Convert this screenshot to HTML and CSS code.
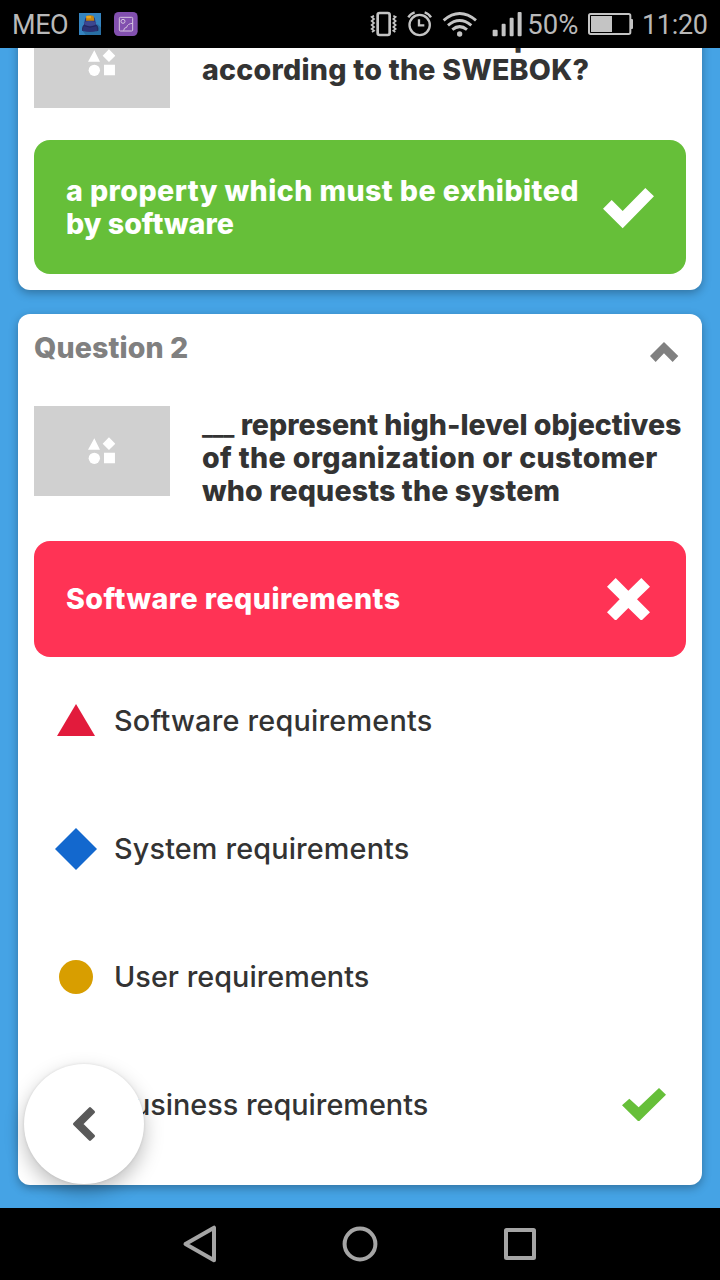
FILE: index.html
```
<!DOCTYPE html>
<html lang="en">
<head>
<meta charset="utf-8">
<title>Quiz results</title>
<link rel="stylesheet" href="styles.css">
</head>
<body>
<svg class="defs" aria-hidden="true">
  <symbol id="shapes" viewBox="264 502 82 82">
    <path d="M264 540L283 506L300 540ZM308 522L327 503L346 522L327 541ZM312 549H345V581H312Z"/>
    <circle cx="283" cy="566" r="17"/>
  </symbol>
</svg>
<div class="screen">
  <header class="status">
    <span class="carrier">MEO</span>
    <svg class="app-icon" viewBox="0 0 66 66">
      <path fill="#3584c0" d="M0 0H66V66H0Z"/>
      <path fill="#286fa3" d="M56 34L66 43V66H20L12 55Z"/>
      <path fill="#252a62" d="M16 34Q8 40 9 53L14 55ZM51 34Q60 40 58 53L52 55Z"/>
      <path fill="#2b3275" d="M17 24Q18 8 33 8Q49 8 49 24L54 54Q34 60 12 54Z"/>
      <path fill="#c8860f" d="M22 9Q33 5 44 9L46 23H21Z"/>
      <path fill="#eba61e" d="M22 9H36V16H22Z"/>
      <path fill="#3d478f" d="M14 28Q33 20 52 28L48 36Q33 42 19 36Z"/>
      <path fill="none" stroke="#191d50" stroke-width="2" d="M15 38Q33 47 52 38"/>
    </svg>
    <svg class="gallery-icon" viewBox="0 0 72 72">
      <rect width="71" height="72" rx="14" fill="#8250af"/>
      <g fill="none" stroke="#d5c5df" stroke-width="3"><rect x="16" y="16" width="40" height="41" rx="3"/><circle cx="27" cy="28" r="6"/><path d="M29 56Q29 47 38 46Q40 35 56 34"/></g>
    </svg>
    <svg class="indicators" viewBox="408 30 460 84">
      <g fill="none" stroke="#c4c4c4">
        <rect x="431" y="39" width="36" height="66" rx="6" stroke-width="8"/>
        <path stroke-width="5" d="M420 47L413 51L420 57L413 63L420 69L413 75L420 81L413 87L420 92L414 96M478 47L485 51L478 57L485 63L478 69L485 75L478 81L485 87L478 92L484 96"/>
        <circle cx="557" cy="75" r="30.500" stroke-width="7"/>
        <path stroke-width="7" d="M555 58V76H571"/><path stroke-width="7" d="M523 52Q529 41 542 37M572 37Q585 41 591 52"/>
        <path stroke-width="9" d="M629 61Q677 20 726 61M642 76Q677 47 712 76M655 89Q677 71 699 89"/>
      </g>
      <g fill="#c4c4c4"><circle cx="677" cy="102" r="8"/><rect x="776" y="89" width="15" height="20" rx="3"/><rect x="803" y="71" width="12" height="38" rx="3"/><rect x="827" y="53" width="12" height="56" rx="3"/><rect x="851" y="36" width="12" height="73" rx="3"/></g>
    </svg>
    <span class="percent">50%</span>
    <svg class="battery" viewBox="0 0 135 66">
      <rect x="3" y="3" width="124" height="60" rx="5" fill="none" stroke="#c4c4c4" stroke-width="6"/><path fill="#c4c4c4" d="M9 9H72V57H9ZM128 18H132Q135 18 135 21V45Q135 48 132 48H128Z"/>
    </svg>
    <span class="time">11:20</span>
  </header>

  <main class="content">
    <section class="card card-first">
      <div class="question">
        <div class="thumb"><svg class="shapes"><use href="#shapes"/></svg></div>
        <p class="prompt"><span class="line line-clipped">p</span><span class="line ls-swebok">according to the SWEBOK?</span></p>
      </div>
      <div class="answer correct">
        <p class="answer-text"><span class="line ls-property">a property which must be exhibited</span><span class="line ls-by">by software</span></p>
        <svg class="check-big" viewBox="68 86 153 121"><path d="M68 148L94 122L127 155L195 86L221 111L127 207Z"/></svg>
      </div>
    </section>

    <section class="card card-second">
      <div class="card-head">
        <h2 class="title">Question 2</h2>
        <svg class="chevron" viewBox="211 546 85 60"><path d="M211 588L253 546L296 588L279 606L253 580L228 606Z"/></svg>
      </div>
      <div class="question">
        <div class="thumb"><svg class="shapes"><use href="#shapes"/></svg></div>
        <p class="prompt"><span class="line ls-represent"><span class="blank">___</span> represent high-level objectives</span><span class="line ls-org">of the organization or customer</span><span class="line ls-who">who requests the system</span></p>
      </div>
      <div class="answer wrong">
        <p class="answer-text"><span class="line ls-wrong">Software requirements</span></p>
        <svg class="cross" viewBox="80 53 129 128"><path d="M80 79L106 53L144 91L183 53L209 79L170 117L209 156L183 181L144 143L106 181L80 156L118 117Z"/></svg>
      </div>
      <ul class="options">
        <li class="option"><svg class="shape" viewBox="0 0 44 44"><path fill="#e21b3c" d="M22 5L41 37H3Z"/></svg><span class="ls-soft">Software requirements</span></li>
        <li class="option"><svg class="shape" viewBox="0 0 44 44"><path fill="#1368ce" d="M22 1L43 22L22 43L1 22Z"/></svg><span class="ls-system">System requirements</span></li>
        <li class="option"><svg class="shape" viewBox="0 0 44 44"><circle cx="22" cy="22" r="17" fill="#d89e00"/></svg><span class="ls-user">User requirements</span></li>
        <li class="option"><svg class="shape" viewBox="0 0 44 44"><path fill="#26890c" d="M6 6H38V38H6Z"/></svg><span class="ls-business">Business requirements</span>
          <svg class="check-small" viewBox="66 53 132 101"><path d="M66 105L88 85L116 111L177 53L198 73L116 154Z"/></svg></li>
      </ul>
    </section>
    <button class="fab" aria-label="Back"><svg class="back" viewBox="216 198 72 108"><path d="M223 252L270 205L281 216L245 252L281 288L270 299Z"/></svg></button>
  </main>

  <nav class="navbar">
    <svg class="nav-icon" viewBox="0 0 40 40"><path d="M5.500 20L34 3.700V36.300Z"/></svg>
    <svg class="nav-icon" viewBox="0 0 40 40"><circle cx="20" cy="20" r="15.400"/></svg>
    <svg class="nav-icon" viewBox="0 0 40 40"><rect x="6" y="6" width="28" height="28" rx=".5"/></svg>
  </nav>
</div>
</body>
</html>
```
FILE: styles.css
```
* { box-sizing: border-box; }
body { margin: 0; }
svg { display: block; flex: none; }
p, h2, ul { margin: 0; padding: 0; }
.defs { position: absolute; width: 0; height: 0; }

.screen {
  display: flex;
  flex-direction: column;
  width: 720px;
  height: 1280px;
  overflow: hidden;
  font-family: Inter, "Open Sans", sans-serif;
  font-size: 28.600px;
  color: #333;
}

/* Status bar */
.status {
  display: flex;
  align-items: center;
  flex: none;
  height: 48px;
  padding-left: 12px;
  background: #000;
  color: #b9b9b9;
  font: 27px/48px Roboto, sans-serif;
  white-space: nowrap;
}
.status > * { flex: none; }
.carrier { width: 67px; padding-top: 2px; letter-spacing: -.4px; }
.app-icon { width: 22px; height: 22px; }
.gallery-icon { width: 24px; height: 24px; margin-left: 13px; }
.indicators { width: 153.300px; height: 28px; margin-left: 231.500px; }
.percent { width: 65.200px; padding: 2px 0 0 4.500px; font-size: 27.500px; }
.battery { width: 45px; height: 22px; }
.time { padding: 2px 0 0 9px; letter-spacing: -.3px; }

/* Scrolled list */
.content {
  position: relative;
  display: flex;
  flex-direction: column;
  gap: 24px;
  flex: none;
  height: 1160px;
  padding: 0 18px;
  overflow: hidden;
  background: #45a3e5;
}
.card {
  flex: none;
  background: #fff;
  border-radius: 12px;
  padding: 16px;
  box-shadow: 0 3px 10px rgba(0, 0, 0, .3);
}
.card-first { height: 288px; margin-top: -46px; }
.card-second { height: 871px; }
.card-head {
  display: flex;
  justify-content: space-between;
  height: 76px;
  padding-right: 7.500px;
}
.title { font-size: 28.600px; line-height: 36px; font-weight: 800; color: #808080; letter-spacing: .1px; }
.chevron { width: 28.300px; height: 20px; margin-top: 12px; fill: #808080; }
.question { display: flex; gap: 32px; height: 90px; }
.thumb {
  display: flex;
  align-items: center;
  justify-content: center;
  flex: none;
  width: 136px;
  height: 90px;
  background: #d0d0d0;
}
.shapes { width: 27.300px; height: 27.300px; fill: #fff; }
.prompt { padding-top: 2px; }
.line { display: block; line-height: 33px; font-weight: 800; white-space: pre; }
.line-clipped { padding-left: 312px; }

.answer {
  display: flex;
  align-items: center;
  justify-content: space-between;
  padding: 0 32px;
  border-radius: 16px;
  color: #fff;
  fill: #fff;
}
.correct { height: 134px; margin-top: 32px; background: #66bf39; }
.correct .answer-text { padding-bottom: 1px; }
.wrong { height: 116px; margin-top: 45px; padding-right: 36.500px; background: #ff3355; }
.wrong .answer-text { padding-bottom: 2px; }
.check-big { width: 51px; height: 40.300px; margin-top: 3px; }
.cross { width: 43px; height: 42.700px; }

.options { list-style: none; }
.option {
  display: flex;
  align-items: center;
  height: 128px;
  padding: 0 20px;
  font-size: 28.800px;
  font-weight: 500;
  white-space: nowrap;
}
.option span { padding-bottom: 1px; }
.shape { width: 44px; height: 44px; margin-right: 16px; }
.check-small { width: 44px; height: 33.700px; margin-left: auto; margin-top: -1px; fill: #66bf39; }

/* Per-line tracking */
.ls-swebok { letter-spacing: .25px; }
.ls-property { letter-spacing: .43px; }
.ls-by { letter-spacing: .02px; }
.ls-represent { letter-spacing: -.02px; }
.blank { font-size: 22.500px; line-height: 0; letter-spacing: -.1px; }
.ls-org { letter-spacing: .35px; }
.ls-who { letter-spacing: .1px; }
.ls-wrong { letter-spacing: .46px; }
.ls-soft { letter-spacing: .22px; }
.ls-system { letter-spacing: .15px; }
.ls-user { letter-spacing: .03px; }
.ls-business { letter-spacing: 0; }

/* Floating back button */
.fab {
  position: absolute;
  left: 24px;
  bottom: 24px;
  display: flex;
  align-items: center;
  justify-content: center;
  width: 120px;
  height: 120px;
  padding: 0;
  border: 0;
  border-radius: 50%;
  background: #fff;
  box-shadow: 0 8px 20px rgba(0, 0, 0, .26), 0 0 3px rgba(0, 0, 0, .1);
}
.back { width: 24px; height: 36px; fill: #5a5a5a; stroke: #5a5a5a; stroke-width: 8; stroke-linejoin: round; }

/* Navigation bar */
.navbar {
  display: flex;
  align-items: center;
  justify-content: center;
  gap: 120px;
  flex: none;
  height: 72px;
  background: #000;
}
.nav-icon { width: 40px; height: 40px; fill: none; stroke: #a5a5a5; stroke-width: 4; stroke-linejoin: round; }
```
